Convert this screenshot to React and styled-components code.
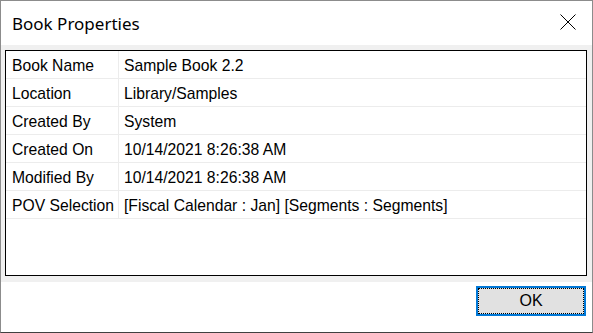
import styled, { createGlobalStyle } from "styled-components";

const GlobalStyle = createGlobalStyle`
  html, body {
    margin: 0;
    padding: 0;
    background: #ffffff;
  }
  * {
    box-sizing: border-box;
  }
`;

const Window = styled.div`
  width: 593px;
  height: 333px;
  display: flex;
  flex-direction: column;
  border: 1px solid #8c8c8c;
  border-bottom-color: #404040;
  background: #ffffff;
`;

const TitleBar = styled.div`
  height: 44px;
  flex: none;
  display: flex;
  align-items: center;
  justify-content: space-between;
  padding: 0 16px 0 11px;
  background: #ffffff;
`;

const Title = styled.span`
  font-family: "Noto Sans", "Open Sans", sans-serif;
  font-size: 17px;
  color: #000000;
`;

const CloseButton = styled.button`
  width: 16px;
  height: 16px;
  padding: 0;
  border: none;
  background: transparent;
  display: flex;
  margin-top: -2px;
`;

const Body = styled.div`
  flex: none;
  background: #f0f0f0;
  padding: 5px 5px 6px 4px;
`;

const Grid = styled.div`
  height: 226px;
  border: 1px solid #000000;
  background: #ffffff;
  display: flex;
  flex-direction: column;
`;

const Row = styled.div`
  height: 28px;
  display: grid;
  grid-template-columns: 113px 1fr;
  border-bottom: 1px solid #ececec;
`;

const Cell = styled.div`
  display: flex;
  align-items: center;
  padding-left: ${(p) => (p.$label ? "6px" : "5px")};
  padding-top: 3px;
  border-right: ${(p) => (p.$label ? "1px solid #ececec" : "none")};
  font-family: "Liberation Sans", Arial, sans-serif;
  font-size: 15.7px;
  color: #000000;
  white-space: nowrap;
`;

const Footer = styled.div`
  flex: 1;
  display: flex;
  justify-content: flex-end;
  align-items: flex-start;
  padding: 4px 6px 0 0;
  background: #ffffff;
`;

const Button = styled.button`
  width: 110px;
  height: 30px;
  border: 2px solid #0078d7;
  background: #e1e1e1;
  outline: 1px dotted #000000;
  outline-offset: -3px;
  font-family: "Liberation Sans", Arial, sans-serif;
  font-size: 16px;
  color: #000000;
  padding: 0;
`;

const properties = [
  ["Book Name", "Sample Book 2.2"],
  ["Location", "Library/Samples"],
  ["Created By", "System"],
  ["Created On", "10/14/2021 8:26:38 AM"],
  ["Modified By", "10/14/2021 8:26:38 AM"],
  ["POV Selection", "[Fiscal Calendar : Jan] [Segments : Segments]"],
];

export default function App() {
  return (
    <>
      <GlobalStyle />
      <Window>
        <TitleBar>
          <Title>Book Properties</Title>
          <CloseButton aria-label="Close">
            <svg width="16" height="16" viewBox="0 0 16 16">
              <path
                d="M0.5 0.5 L15.5 15.5 M15.5 0.5 L0.5 15.5"
                stroke="#000"
                strokeWidth="1"
                fill="none"
              />
            </svg>
          </CloseButton>
        </TitleBar>
        <Body>
          <Grid>
            {properties.map(([label, value]) => (
              <Row key={label}>
                <Cell $label>{label}</Cell>
                <Cell>{value}</Cell>
              </Row>
            ))}
          </Grid>
        </Body>
        <Footer>
          <Button>OK</Button>
        </Footer>
      </Window>
    </>
  );
}
